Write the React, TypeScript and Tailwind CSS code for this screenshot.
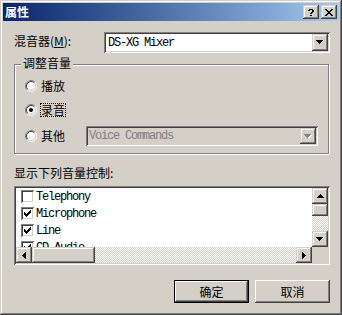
import React from "react";

const cjk = "font-['Noto_Sans_CJK_SC','Noto_Sans',sans-serif]";
const mono = "font-['Liberation_Mono','Noto_Sans_CJK_SC',monospace]";

const sunken =
  "shadow-[inset_1px_1px_#808080,inset_-1px_-1px_#ffffff,inset_2px_2px_#404040,inset_-2px_-2px_#d4d0c8]";
const scrollBtn =
  "shadow-[inset_-1px_-1px_#404040,inset_1px_1px_#d4d0c8,inset_-2px_-2px_#808080,inset_2px_2px_#ffffff]";
const pushBtn =
  "shadow-[inset_-1px_-1px_#404040,inset_1px_1px_#ffffff,inset_-2px_-2px_#808080,inset_2px_2px_#d4d0c8]";

function DownArrow({ disabled = false }: { disabled?: boolean }) {
  const d = "M0 0h7v1H0z M1 1h5v1H1z M2 2h3v1H2z M3 3h1v1H3z";
  return (
    <svg width="8" height="5" viewBox="0 0 8 5" shapeRendering="crispEdges">
      {disabled && <path d={d} fill="#ffffff" transform="translate(1 1)" />}
      <path d={d} fill={disabled ? "#808080" : "#000000"} />
    </svg>
  );
}

function UpArrow() {
  return (
    <svg width="7" height="4" viewBox="0 0 7 4" shapeRendering="crispEdges">
      <path d="M3 0h1v1H3z M2 1h3v1H2z M1 2h5v1H1z M0 3h7v1H0z" fill="#000" />
    </svg>
  );
}

function LeftArrow() {
  return (
    <svg width="4" height="7" viewBox="0 0 4 7" shapeRendering="crispEdges">
      <path d="M0 3h1v1H0z M1 2h1v3H1z M2 1h1v5H2z M3 0h1v7H3z" fill="#000" />
    </svg>
  );
}

function RightArrow() {
  return (
    <svg width="4" height="7" viewBox="0 0 4 7" shapeRendering="crispEdges">
      <path d="M3 3h1v1H3z M2 2h1v3H2z M1 1h1v5H1z M0 0h1v7H0z" fill="#000" />
    </svg>
  );
}

function Radio({ checked = false }: { checked?: boolean }) {
  return (
    <svg width="12" height="12" viewBox="0 0 12 12" className="shrink-0">
      <circle cx="6" cy="6" r="4.5" fill="#ffffff" />
      <path d="M2.11 9.89 A5.5 5.5 0 0 1 9.89 2.11" stroke="#808080" fill="none" />
      <path d="M9.89 2.11 A5.5 5.5 0 0 1 2.11 9.89" stroke="#ffffff" fill="none" />
      <path d="M2.82 9.18 A4.5 4.5 0 0 1 9.18 2.82" stroke="#404040" fill="none" />
      <path d="M9.18 2.82 A4.5 4.5 0 0 1 2.82 9.18" stroke="#d4d0c8" fill="none" />
      {checked && <circle cx="6" cy="6" r="2" fill="#000" />}
    </svg>
  );
}

function Check({ checked }: { checked: boolean }) {
  return (
    <div className={`w-[13px] h-[13px] bg-white ${sunken} flex items-start justify-start shrink-0`}>
      {checked && (
        <svg width="7" height="7" viewBox="0 0 7 7" shapeRendering="crispEdges" className="mt-[3px] ml-[3px]">
          <path
            d="M6 0h1v1h-1z M5 1h2v1h-2z M0 2h1v1H0z M4 2h3v1H4z M0 3h2v1H0z M3 3h3v1H3z M0 4h5v1H0z M1 5h3v1H1z M2 6h1v1H2z"
            fill="#000"
          />
        </svg>
      )}
    </div>
  );
}

function ComboButton({ disabled = false, h = 17 }: { disabled?: boolean; h?: number }) {
  return (
    <div
      className={`w-[16px] ${h === 17 ? "h-[17px]" : "h-[16px]"} bg-[#d4d0c8] ${scrollBtn} flex items-center justify-center shrink-0`}
    >
      <DownArrow disabled={disabled} />
    </div>
  );
}

const items: { name: string; checked: boolean }[] = [
  { name: "Telephony", checked: false },
  { name: "Microphone", checked: true },
  { name: "Line", checked: true },
  { name: "CD Audio", checked: true },
];

export default function App() {
  return (
    <div
      className={`w-[342px] h-[315px] bg-[#d4d0c8] p-[3px] flex flex-col overflow-hidden shadow-[inset_-1px_-1px_#404040,inset_1px_1px_#d4d0c8,inset_-2px_-2px_#808080,inset_2px_2px_#ffffff] ${cjk} text-[12px] text-black select-none`}
    >
      {/* Title bar */}
      <div className="h-[18px] bg-linear-to-r from-[#0a246a] to-[#a6caf0] flex items-center pl-[2px] pr-[2px] shrink-0">
        <span className="text-white font-bold text-[12px] leading-[14px] flex-1">属性</span>
        <div className={`w-[16px] h-[14px] bg-[#d4d0c8] ${scrollBtn} flex items-center justify-center`}>
          <svg width="6" height="7" viewBox="0 0 6 7" shapeRendering="crispEdges">
            <path
              d="M1 0h4v1H1z M0 1h2v1H0z M4 1h2v1H4z M4 2h2v1H4z M3 3h2v1H3z M2 4h2v1H2z M2 6h2v1H2z"
              fill="#000"
            />
          </svg>
        </div>
        <div className={`ml-[2px] w-[16px] h-[14px] bg-[#d4d0c8] ${scrollBtn} flex items-center justify-center`}>
          <svg width="8" height="7" viewBox="0 0 8 7" shapeRendering="crispEdges">
            <path
              d="M0 0h2v1H0z M6 0h2v1H6z M1 1h2v1H1z M5 1h2v1H5z M2 2h4v1H2z M3 3h2v1H3z M2 4h4v1H2z M1 5h2v1H1z M5 5h2v1H5z M0 6h2v1H0z M6 6h2v1H6z"
              fill="#000"
            />
          </svg>
        </div>
      </div>

      {/* Body */}
      <div className="flex-1 pl-[11px] pr-[9px] flex flex-col">
        {/* Mixer row */}
        <div className="mt-[11px] h-[21px] flex items-center">
          <span className="w-[90px] leading-[14px] -mt-[4px]">
            混音器(<span className="underline">M</span>):
          </span>
          <div className={`flex-1 h-[21px] bg-white ${sunken} flex items-center pl-[4px] pr-[2px]`}>
            <span className={`${mono} text-[12px] tracking-[-1.2px] flex-1 leading-[14px]`}>DS-XG Mixer</span>
            <ComboButton />
          </div>
        </div>

        {/* Group box */}
        <div className="relative mt-[11px] h-[90px] border border-[#808080] shadow-[inset_1px_1px_#ffffff,1px_1px_#ffffff] mr-[1px]">
          <span className="absolute left-[6px] -top-[9px] px-[2px] bg-[#d4d0c8] leading-[14px]">调整音量</span>
          <div className="pt-[13px] pl-[10px] flex flex-col">
            <div className="h-[16px] flex items-center gap-[3px]">
              <Radio />
              <span className="border border-transparent leading-[12px]">播放</span>
            </div>
            <div className="mt-[8px] h-[16px] flex items-center gap-[3px]">
              <Radio checked />
              <span className="border border-dotted border-black leading-[12px]">录音</span>
            </div>
            <div className="mt-[8px] h-[20px] flex items-center">
              <div className="w-[61px] flex items-center gap-[3px]">
                <Radio />
                <span className="border border-transparent leading-[12px]">其他</span>
              </div>
              <div className={`w-[232px] h-[20px] bg-[#d4d0c8] ${sunken} flex items-center pl-[3px] pr-[2px]`}>
                <span className={`${mono} text-[12px] tracking-[-1.2px] text-[#808080] flex-1 leading-[14px]`}>
                  Voice Commands
                </span>
                <ComboButton disabled h={16} />
              </div>
            </div>
          </div>
        </div>

        {/* List label */}
        <div className="mt-[12px] h-[14px] leading-[14px]">显示下列音量控制:</div>

        {/* List box */}
        <div className={`mt-[6px] h-[79px] bg-white ${sunken} p-[2px]`}>
          <div className="h-full grid grid-cols-[1fr_16px] grid-rows-[1fr_16px]">
            <div className="overflow-hidden flex flex-col">
              {items.map((it) => (
                <div key={it.name} className="h-[17px] shrink-0 flex items-center pl-[5px] gap-[2px]">
                  <Check checked={it.checked} />
                  <span className={`${mono} text-[12px] tracking-[-1.2px] leading-[14px]`}>{it.name}</span>
                </div>
              ))}
            </div>
            {/* vertical scrollbar */}
            <div className="flex flex-col">
              <div className={`h-[16px] bg-[#d4d0c8] ${scrollBtn} flex items-center justify-center`}>
                <UpArrow />
              </div>
              <div className={`h-[12px] bg-[#d4d0c8] ${scrollBtn}`} />
              <div className="flex-1 bg-[repeating-conic-gradient(#d4d0c8_0_25%,#ffffff_0_50%)] bg-[length:2px_2px]" />
              <div className={`h-[16px] bg-[#d4d0c8] ${scrollBtn} flex items-center justify-center`}>
                <DownArrow />
              </div>
            </div>
            {/* horizontal scrollbar */}
            <div className="flex">
              <div className={`w-[16px] bg-[#d4d0c8] ${scrollBtn} flex items-center justify-center`}>
                <LeftArrow />
              </div>
              <div className={`w-[63px] bg-[#d4d0c8] ${scrollBtn}`} />
              <div className="flex-1 bg-[repeating-conic-gradient(#d4d0c8_0_25%,#ffffff_0_50%)] bg-[length:2px_2px]" />
              <div className={`w-[16px] bg-[#d4d0c8] ${scrollBtn} flex items-center justify-center`}>
                <RightArrow />
              </div>
            </div>
            <div className="bg-[#d4d0c8]" />
          </div>
        </div>

        {/* Buttons */}
        <div className="mt-[15px] flex justify-end gap-[6px]">
          <div className="w-[75px] h-[23px] border border-black">
            <div className={`w-full h-full bg-[#d4d0c8] ${pushBtn} flex items-center justify-center leading-[14px]`}>
              确定
            </div>
          </div>
          <div className={`w-[75px] h-[23px] bg-[#d4d0c8] ${pushBtn} flex items-center justify-center leading-[14px]`}>
            取消
          </div>
        </div>
      </div>
    </div>
  );
}
